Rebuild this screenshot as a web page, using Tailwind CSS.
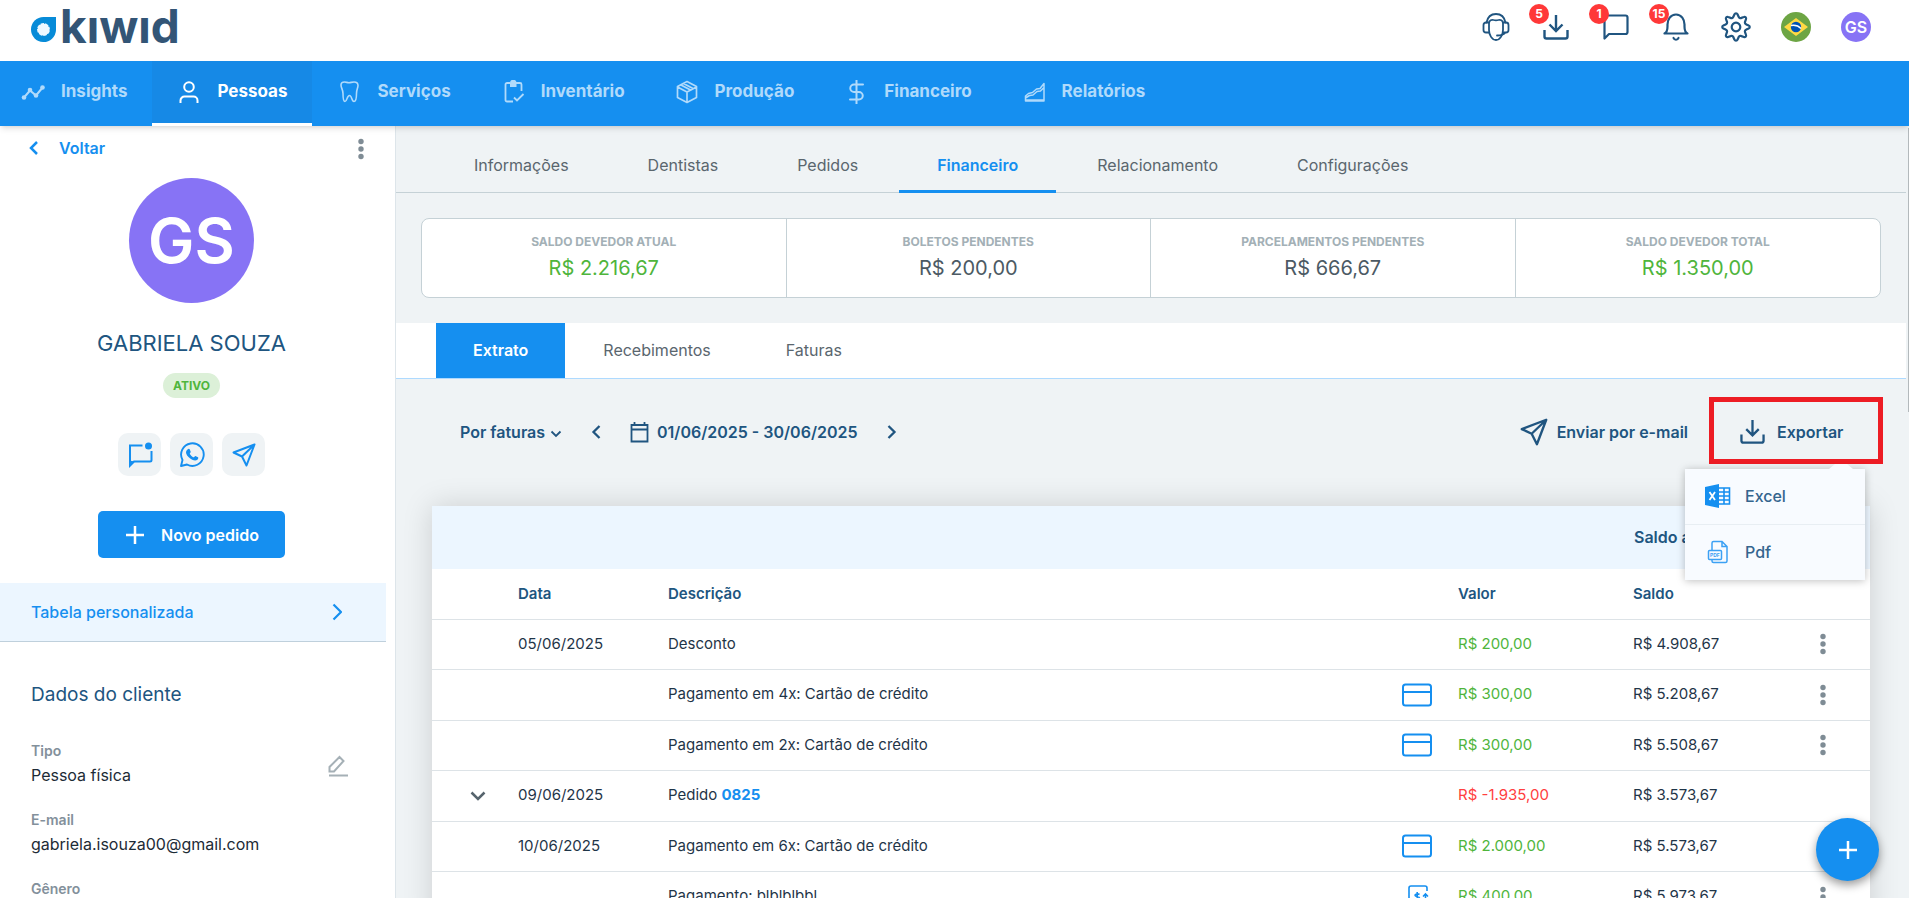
<!DOCTYPE html>
<html lang="pt-BR">
<head>
  <meta charset="UTF-8" />
  <meta name="viewport" content="width=device-width, initial-scale=1.0" />
  <title>Kiwid - Gabriela Souza</title>
  <script src="https://cdn.jsdelivr.net/npm/@tailwindcss/browser@4"></script>
</head>
<body class="h-screen flex flex-col overflow-hidden bg-[#eff3f5] font-['Inter',sans-serif] text-base text-[#1f3548]">

  <!-- Shared icons -->
  <svg class="hidden">
    <symbol id="dots" viewBox="0 0 6 22"><g fill="#7f8c95"><circle cx="3" cy="3.5" r="2.7"/><circle cx="3" cy="11" r="2.7"/><circle cx="3" cy="18.5" r="2.7"/></g></symbol>
    <symbol id="card" viewBox="0 0 30 24"><rect x="1" y="1.500" width="28" height="21" rx="2.500" fill="none" stroke="#158ff0" stroke-width="2"/><path d="M1 9h28" stroke="#158ff0" stroke-width="2"/></symbol>
    <symbol id="plane" viewBox="0 0 24 24"><path d="M22.500 1.500 1.500 9.500l8.500 4 4.500 9zM22.500 1.500 10 13.500" fill="none" stroke="currentColor" stroke-width="2" stroke-linejoin="round"/></symbol>
    <symbol id="download" viewBox="0 0 26 26"><path d="M1.500 16v6.500a2 2 0 0 0 2 2h19a2 2 0 0 0 2-2V16M13 1v16M6.500 10.500l6.500 6.500 6.500-6.500" fill="none" stroke="currentColor" stroke-width="2.400"/></symbol>
  </svg>

  <header class="h-[61px] shrink-0 bg-white flex items-start justify-between pl-[31px] pr-[38px]">
    <a href="#" aria-label="Kiwid" class="flex items-start gap-[3px]">
      <svg class="w-[26px] h-[26px] mt-[17px]" viewBox="0 0 26 26">
        <path d="M25 0v13A12.500 12.500 0 1 1 12.500 0z" fill="#078bd8"/>
        <circle cx="12.500" cy="12.500" r="6.500" fill="#eef8ff"/>
        <circle cx="12.500" cy="12.500" r="6.500" fill="none" stroke="#078bd8" stroke-width="1.500" stroke-dasharray="1 4.100"/>
      </svg>
      <span class="text-[46px] leading-[52px] font-bold text-[#335576]">kıwıd</span>
    </a>
    <div class="flex gap-[30px] pt-3 text-[#205580]">
      <button aria-label="Suporte" class="size-[30px] flex items-center justify-center">
        <svg class="size-7" viewBox="0 0 28 28" fill="none" stroke="currentColor" stroke-width="1.800" stroke-linecap="round">
          <path d="M4.500 9.500C5.500 4.500 9 1 14 1s8.500 3.500 9.500 8.500M7 10c.5-3 2.500-3.500 4.500-3 1.500.4 3.500.4 5 0 2-.5 4 0 4.500 3v7c0 5-3 10-7 10s-7-5-7-10z"/>
          <path d="M7 9.500H4a2.500 2.500 0 0 0-2.500 2.500v5A2.500 2.500 0 0 0 4 19.500h3M21 9.500h3a2.500 2.500 0 0 1 2.500 2.500v5a2.500 2.500 0 0 1-2.500 2.500h-3M23.500 19.500c-1.500 2-4 3-8.500 3"/>
        </svg>
      </button>
      <button aria-label="Downloads" class="relative size-[30px] flex items-center justify-center">
        <svg class="size-[26px]"><use href="#download"/></svg>
        <span class="absolute -left-3 -top-2 size-5 rounded-full bg-[#ff3838] text-white text-xs leading-5 font-bold text-center">5</span>
      </button>
      <button aria-label="Mensagens" class="relative size-[30px] flex items-center justify-center">
        <svg class="size-[26px]" viewBox="0 0 26 26" fill="none" stroke="currentColor" stroke-width="2.200" stroke-linejoin="round"><path d="M1.500 24.500V3.500a2 2 0 0 1 2-2h19a2 2 0 0 1 2 2v14.500a2 2 0 0 1-2 2H6z"/></svg>
        <span class="absolute -left-3 -top-2 size-5 rounded-full bg-[#ff3838] text-white text-xs leading-5 font-bold text-center">1</span>
      </button>
      <button aria-label="Notificações" class="relative size-[30px] flex items-center justify-center">
        <svg class="size-7" viewBox="0 0 28 28" fill="none" stroke="currentColor" stroke-width="2.200" stroke-linecap="round" stroke-linejoin="round"><path d="M2.500 20.500h23c-2-1-3-3-3-7v-2c0-5-3-10-8.500-10s-8.500 5-8.500 10v2c0 4-1 6-3 7zM11.500 25c.8 2.300 4.200 2.300 5 0"/></svg>
        <span class="absolute -left-3 -top-2 size-5 rounded-full bg-[#ff3838] text-white text-xs leading-5 font-bold text-center">15</span>
      </button>
      <button aria-label="Ajustes" class="size-[30px]">
        <svg class="size-[30px]" viewBox="-15 -15 30 30" fill="none" stroke="currentColor" stroke-width="2.200" stroke-linejoin="round">
          <circle r="4.300"/>
          <path d="M-2.600-10.300L-1.500-12.700A1.600 1.600 0 0 1 1.500-12.700L2.600-10.300A2 2 0 0 0 5.400-9.100L7.900-10A1.600 1.600 0 0 1 10-7.900L9.100-5.400A2 2 0 0 0 10.300-2.600L12.700-1.500A1.600 1.600 0 0 1 12.700 1.500L10.300 2.600A2 2 0 0 0 9.100 5.400L10 7.900A1.600 1.600 0 0 1 7.900 10L5.400 9.100A2 2 0 0 0 2.600 10.300L1.500 12.700A1.600 1.600 0 0 1-1.500 12.700L-2.600 10.300A2 2 0 0 0-5.400 9.100L-7.900 10A1.600 1.600 0 0 1-10 7.900L-9.100 5.400A2 2 0 0 0-10.300 2.600L-12.700 1.500A1.600 1.600 0 0 1-12.700-1.500L-10.300-2.600A2 2 0 0 0-9.100-5.400L-10-7.900A1.600 1.600 0 0 1-7.900-10L-5.400-9.100A2 2 0 0 0-2.600-10.300z"/>
        </svg>
      </button>
      <button aria-label="Idioma" class="size-[30px]">
        <svg class="size-[30px]" viewBox="0 0 30 30"><circle cx="15" cy="15" r="15" fill="#6da544"/><path d="M15 6l12 9-12 9-12-9z" fill="#ffda44"/><circle cx="15" cy="15" r="5.200" fill="#0052b4"/><path d="M10 13.500c4-.7 7.500.3 10 3" fill="none" stroke="#fff" stroke-width="1.400"/></svg>
      </button>
      <button class="size-[30px] rounded-full bg-[#8773f5] text-white text-base font-semibold">GS</button>
    </div>
  </header>

  <nav class="relative z-10 h-[65px] shrink-0 bg-[#158ff0] shadow-md flex text-[17px] font-bold text-[#b0dafb]">
    <a href="#" class="flex items-center gap-4 pl-[21px] pr-[25px] pb-[3px]">
      <svg class="size-6" viewBox="0 0 24 24" fill="none" stroke="currentColor" stroke-width="2"><path d="M3 17.500l6-7 6 5 7-8.500"/><g fill="currentColor" stroke="none"><circle cx="3" cy="17.500" r="2.300"/><circle cx="9" cy="10" r="2.300"/><circle cx="15" cy="15.500" r="2.300"/><circle cx="21.500" cy="7.500" r="2.300"/></g></svg>
      Insights
    </a>
    <a href="#" class="flex items-center gap-4 px-[25px] bg-[#1689e6] text-white border-b-3 border-white">
      <svg class="size-6" viewBox="0 0 24 24" fill="none" stroke="currentColor" stroke-width="2"><circle cx="12" cy="7" r="4.800"/><path d="M3.500 23v-2.500a4 4 0 0 1 4-4h9a4 4 0 0 1 4 4V23"/></svg>
      Pessoas
    </a>
    <a href="#" class="flex items-center gap-4 px-[25px] pb-[3px]">
      <svg class="size-6" viewBox="0 0 24 24" fill="none" stroke="currentColor" stroke-width="1.600" stroke-linejoin="round"><path d="M4 5c0-2 1.500-3 3.500-3 1.700 0 2.800.7 4.500.7s3-.7 5-.7 4 1 4 3.500c0 2.500-1.500 4-1.500 8 0 4-.7 8-2.500 8-2.500 0-2-6-4.500-6S10 21.500 8 21.500 6 17.500 6 13.500C6 9.500 4 8 4 5z"/></svg>
      Serviços
    </a>
    <a href="#" class="flex items-center gap-4 px-[25px] pb-[3px]">
      <svg class="size-6" viewBox="0 0 24 24" fill="none" stroke="currentColor" stroke-width="1.800"><path d="M12 21.500H6a1.500 1.500 0 0 1-1.500-1.500V4.500A1.500 1.500 0 0 1 6 3h3M15 3h4a1.500 1.500 0 0 1 1.500 1.500V11M13 17.500l3 3 6.500-6.500"/><path d="M9 3a3 3 0 0 1 6.500 0v4H9z" fill="currentColor" stroke="none"/></svg>
      Inventário
    </a>
    <a href="#" class="flex items-center gap-4 px-[25px] pb-[3px]">
      <svg class="size-6" viewBox="0 0 24 24" fill="none" stroke="currentColor" stroke-width="1.700" stroke-linejoin="round"><path d="M12 1.500l9.500 5v11L12 22.500l-9.500-5v-11zM2.500 7L12 12l9.500-5M12 12v10.500M6 5l9.500 5M8.500 3.500l9.500 5"/></svg>
      Produção
    </a>
    <a href="#" class="flex items-center gap-4 px-[25px] pb-[3px]">
      <svg class="size-6" viewBox="0 0 24 24" fill="none" stroke="currentColor" stroke-width="2" stroke-linecap="round"><path d="M12.500 0v24M19 4.500h-9a3.700 3.700 0 0 0 0 7.500h5a3.700 3.700 0 0 1 0 7.500H6"/></svg>
      Financeiro
    </a>
    <a href="#" class="flex items-center gap-4 px-[25px] pb-[3px]">
      <svg class="size-6" viewBox="0 0 24 24" fill="none" stroke="currentColor" stroke-width="1.500" stroke-linejoin="round"><path d="M3.500 21V16l3-2.500 4-1 4-3.500 3.500-.5 4-5V21zM3.500 18l4-2.500 3.500-.5 4-3.500 3.500-.5 3-3M3.500 20h18"/></svg>
      Relatórios
    </a>
  </nav>

  <div class="flex-1 min-h-0 flex">
    <!-- Client sidebar -->
    <aside class="w-[396px] shrink-0 bg-white border-r border-[#dde5ea] pr-[9px] pt-3 overflow-hidden">
      <div class="h-6 flex items-start justify-between pl-7 pr-[22px]">
        <a href="#" class="flex items-center gap-5 text-[#158ff0] leading-5 font-semibold">
          <svg class="w-[11px] h-4" viewBox="0 0 11 16"><path d="M9 2L3 8l6 6" fill="none" stroke="currentColor" stroke-width="2.500"/></svg>
          Voltar
        </a>
        <button aria-label="Mais opções"><svg class="w-[6px] h-[22px]"><use href="#dots"/></svg></button>
      </div>
      <div class="flex flex-col items-center pt-4 pr-[3px]">
        <div class="size-[125px] rounded-full bg-[#8773f5] text-white text-[62px] leading-[125px] font-semibold text-center">GS</div>
        <h1 class="mt-[26px] text-[22px] leading-7 text-[#205580]">GABRIELA SOUZA</h1>
        <span class="mt-4 h-[25px] px-[10px] rounded-full bg-[#dcf0d8] text-[#4fb53c] text-xs leading-[25px] font-bold">ATIVO</span>
        <div class="mt-[35px] flex gap-[9px] text-[#158ff0]">
          <button aria-label="Mensagem" class="size-[43px] rounded-[10px] bg-[#eff3f5] flex items-center justify-center">
            <svg class="size-[26px]" viewBox="0 0 26 26"><path d="M15.500 3.500H3v20l4-4h16a1.500 1.500 0 0 0 1.500-1.500V9" fill="none" stroke="currentColor" stroke-width="2"/><path d="M2 18.500v7l6-6z" fill="currentColor"/><circle cx="21.500" cy="4" r="3.500" fill="currentColor"/></svg>
          </button>
          <button aria-label="WhatsApp" class="size-[43px] rounded-[10px] bg-[#eff3f5] flex items-center justify-center">
            <svg class="size-[26px]" viewBox="0 0 26 26"><path d="M2 24l1.500-6A11.300 11.300 0 1 1 8 22.500z" fill="none" stroke="currentColor" stroke-width="1.900" stroke-linejoin="round"/><path d="M8.500 7.500c1-1 2-.8 2.300 0l.9 2.300c.2.600-.9 1.500-.9 1.900 0 .7 2.500 3.300 3.800 3.600.6.100 1.300-1.500 1.900-1.300l2.500 1.200c.6.300.3 1.800-.6 2.500-1.300 1-3 1-5.200 0-2.700-1.200-5.200-3.600-6-6.200-.5-1.500.2-3.100 1.300-4z" fill="currentColor"/></svg>
          </button>
          <button aria-label="Enviar" class="size-[43px] rounded-[10px] bg-[#eff3f5] flex items-center justify-center">
            <svg class="size-6"><use href="#plane"/></svg>
          </button>
        </div>
        <button class="mt-[35px] h-[47px] px-[26px] rounded-[5px] bg-[#158ff0] text-white font-semibold flex items-center gap-[15px]">
          <svg class="size-[22px]" viewBox="0 0 22 22"><path d="M11 2v18M2 11h18" stroke="currentColor" stroke-width="2.500"/></svg>
          Novo pedido
        </button>
      </div>
      <a href="#" class="mt-[25px] h-[59px] flex items-center justify-between pl-[31px] pr-11 bg-[#ecf6ff] border-b border-[#bfd0dc] text-[#158ff0] font-medium">
        Tabela personalizada
        <svg class="w-[10px] h-[18px]" viewBox="0 0 10 18"><path d="M1.500 1.500L9 9l-7.500 7.500" fill="none" stroke="currentColor" stroke-width="2.200"/></svg>
      </a>
      <div class="px-[31px]">
        <h2 class="mt-[41px] text-[19px] leading-6 text-[#205580]">Dados do cliente</h2>
        <dl class="mt-[34px] flex gap-4 justify-between">
          <div class="space-y-[23px]">
            <div>
              <dt class="text-sm font-semibold text-[#83909b]">Tipo</dt>
              <dd class="mt-[2px] text-[#1d2b36]">Pessoa física</dd>
            </div>
            <div>
              <dt class="text-sm font-semibold text-[#83909b]">E-mail</dt>
              <dd class="mt-[2px] text-[#1d2b36]">gabriela.isouza00@gmail.com</dd>
            </div>
            <div>
              <dt class="text-sm font-semibold text-[#83909b]">Gênero</dt>
              <dd class="mt-[2px] text-[#1d2b36]">Feminino</dd>
            </div>
          </div>
          <button aria-label="Editar" class="self-start mt-[14px] mr-[6px]">
            <svg class="size-[22px]" viewBox="0 0 22 22" fill="none" stroke="#a5b0b6" stroke-width="2"><path d="M2.500 16.500v-4.500L12.500 2l4 4-9.500 10.500zM2 20.500h19"/></svg>
          </button>
        </dl>
      </div>
    </aside>

    <main class="flex-1 min-w-0 pr-[3px] overflow-hidden">
      <div class="h-[67px] pl-10 flex gap-[3px] border-b border-[#c5d1d6] text-[#5a666e]">
        <a href="#" class="h-[67px] px-[38px] pt-[27px]">Informações</a>
        <a href="#" class="h-[67px] px-[38px] pt-[27px]">Dentistas</a>
        <a href="#" class="h-[67px] px-[38px] pt-[27px]">Pedidos</a>
        <a href="#" class="h-[67px] px-[38px] pt-[27px] border-b-3 border-[#158ff0] text-[#158ff0] font-semibold">Financeiro</a>
        <a href="#" class="h-[67px] px-[38px] pt-[27px]">Relacionamento</a>
        <a href="#" class="h-[67px] px-[38px] pt-[27px]">Configurações</a>
      </div>

      <div class="mt-[25px] ml-[25px] mr-[25px] h-20 grid grid-cols-4 bg-white border border-[#c5d1d6] rounded-lg divide-x divide-[#c5d1d6] text-center">
        <div class="pt-[13px]">
          <p class="text-xs leading-5 font-bold text-[#a3b0b6]">SALDO DEVEDOR ATUAL</p>
          <p class="mt-1 text-xl leading-6 text-[#4fb53c]">R$ 2.216,67</p>
        </div>
        <div class="pt-[13px]">
          <p class="text-xs leading-5 font-bold text-[#a3b0b6]">BOLETOS PENDENTES</p>
          <p class="mt-1 text-xl leading-6 text-[#4c5a64]">R$ 200,00</p>
        </div>
        <div class="pt-[13px]">
          <p class="text-xs leading-5 font-bold text-[#a3b0b6]">PARCELAMENTOS PENDENTES</p>
          <p class="mt-1 text-xl leading-6 text-[#4c5a64]">R$ 666,67</p>
        </div>
        <div class="pt-[13px]">
          <p class="text-xs leading-5 font-bold text-[#a3b0b6]">SALDO DEVEDOR TOTAL</p>
          <p class="mt-1 text-xl leading-6 text-[#4fb53c]">R$ 1.350,00</p>
        </div>
      </div>

      <div class="mt-[25px] h-14 pl-10 flex bg-white border-b border-[#aedaff] text-[#5a666e]">
        <a href="#" class="px-[37px] leading-[55px] bg-[#158ff0] text-white font-semibold">Extrato</a>
        <a href="#" class="px-[38px] leading-[55px]">Recebimentos</a>
        <a href="#" class="px-[37px] leading-[55px]">Faturas</a>
      </div>

      <!-- Filters and actions -->
      <div class="mt-[18px] pl-16 pr-[23px] h-[67px] flex items-center justify-between text-[#205580] font-semibold">
        <div class="flex items-center pt-[2px]">
          <label class="flex items-center gap-1">
            <select aria-label="Agrupar por" class="appearance-none">
              <option>Por faturas</option>
            </select>
            <svg class="w-3 h-2 mt-1" viewBox="0 0 12 8"><path d="M1.500 1.500L6 6l4.500-4.500" fill="none" stroke="currentColor" stroke-width="1.800"/></svg>
          </label>
          <button aria-label="Período anterior" class="ml-[29px]"><svg class="w-[10px] h-4" viewBox="0 0 10 16"><path d="M8.500 2L2.500 8l6 6" fill="none" stroke="currentColor" stroke-width="2.300"/></svg></button>
          <button class="ml-[29px] flex items-center gap-2">
            <svg class="w-[19px] h-[22px]" viewBox="0 0 19 22"><path d="M1.500 4h16v16.500h-16zM1 8.500h17M4.500 1v3M14.500 1v3" fill="none" stroke="currentColor" stroke-width="1.800"/></svg>
            01/06/2025 - 30/06/2025
          </button>
          <button aria-label="Próximo período" class="ml-[29px]"><svg class="w-[10px] h-4" viewBox="0 0 10 16"><path d="M1.500 2l6 6-6 6" fill="none" stroke="currentColor" stroke-width="2.300"/></svg></button>
        </div>
        <div class="flex items-center gap-[21px]">
          <button class="flex items-center gap-[9px] pt-[2px]">
            <svg class="size-7"><use href="#plane"/></svg>
            Enviar por e-mail
          </button>
          <div class="relative z-20">
            <button class="h-[67px] w-[174px] pl-[26px] pt-[2px] border-5 border-[#ed1c24] flex items-center gap-3">
              <svg class="size-[25px]"><use href="#download"/></svg>
              Exportar
            </button>
            <div class="absolute right-[18px] top-[72px] w-[180px] bg-[#f8fbff] shadow-[0_1px_8px_rgba(0,0,0,0.25)] font-medium text-[#34658e]">
              <svg class="absolute right-3 -top-[5px] w-6 h-[5px]" viewBox="0 0 24 5"><path d="M0 5l6-5h12l6 5z" fill="#f8fbff"/></svg>
              <button class="w-full h-14 pl-5 pb-[2px] flex items-center gap-[14px] border-b border-[#e8eef3]">
                <svg class="w-[26px] h-6" viewBox="0 0 26 24"><path d="M0 3l14-3v24L0 21z" fill="#158ff0"/><path d="M14 4h10.500v16H14M14 8h10M14 12h10M14 16h10M19 4v16" fill="none" stroke="#158ff0" stroke-width="1.600"/><path d="M4.500 8l5.500 8M10 8l-5.500 8" stroke="#fff" stroke-width="1.800"/></svg>
                Excel
              </button>
              <button class="w-full h-[55px] pl-5 pb-[2px] flex items-center gap-[14px]">
                <svg class="w-[26px] h-6" viewBox="0 0 26 24" fill="none" stroke="#3ca1f4" stroke-width="1.500"><path d="M7 10V3a1.500 1.500 0 0 1 1.500-1.500H17l5 5V21a1.500 1.500 0 0 1-1.500 1.500h-12A1.500 1.500 0 0 1 7 21v-1M17 1.500v5h5"/><rect x="3.500" y="10.500" width="13" height="9" rx="1"/><text x="5" y="17" font-size="5" font-weight="700" fill="#3ca1f4" stroke="none">PDF</text></svg>
                Pdf
              </button>
            </div>
          </div>
        </div>
      </div>

      <div class="mt-[42px] ml-9 mr-9 bg-white shadow-[0_0_28px_rgba(0,0,0,0.15)]">
        <table class="w-full table-fixed text-left text-[15px]">
          <colgroup>
            <col class="w-[73px]" /><col class="w-[150px]" /><col /><col class="w-14" /><col class="w-[175px]" /><col class="w-[175px]" /><col class="w-[75px]" />
          </colgroup>
          <thead class="text-[#205580]">
            <tr class="h-[63px] bg-[#ecf6ff] text-base">
              <td colspan="5"></td>
              <td colspan="2" class="pl-[14px] pb-[2px] font-semibold">Saldo anterior</td>
            </tr>
            <tr class="h-[50px] border-b border-[#dde3e7]">
              <th></th>
              <th class="pl-[13px] font-semibold">Data</th>
              <th class="pl-[13px] font-semibold">Descrição</th>
              <th></th>
              <th class="pl-[13px] font-semibold">Valor</th>
              <th class="pl-[13px] font-semibold">Saldo</th>
              <th></th>
            </tr>
          </thead>
          <tbody>
            <tr class="h-[50px] border-b border-[#dde3e7]">
              <td></td>
              <td class="pl-[13px]">05/06/2025</td>
              <td class="pl-[13px]">Desconto</td>
              <td></td>
              <td class="pl-[13px] text-[#4fb53c]">R$ 200,00</td>
              <td class="pl-[13px]">R$ 4.908,67</td>
              <td class="pl-[25px]"><button aria-label="Opções" class="block"><svg class="w-[6px] h-[22px]"><use href="#dots"/></svg></button></td>
            </tr>
            <tr class="h-[51px] border-b border-[#dde3e7]">
              <td></td>
              <td></td>
              <td class="pl-[13px]">Pagamento em 4x: Cartão de crédito</td>
              <td class="pl-[13px]"><svg class="w-[30px] h-6"><use href="#card"/></svg></td>
              <td class="pl-[13px] text-[#4fb53c]">R$ 300,00</td>
              <td class="pl-[13px]">R$ 5.208,67</td>
              <td class="pl-[25px]"><button aria-label="Opções" class="block"><svg class="w-[6px] h-[22px]"><use href="#dots"/></svg></button></td>
            </tr>
            <tr class="h-[50px] border-b border-[#dde3e7]">
              <td></td>
              <td></td>
              <td class="pl-[13px]">Pagamento em 2x: Cartão de crédito</td>
              <td class="pl-[13px]"><svg class="w-[30px] h-6"><use href="#card"/></svg></td>
              <td class="pl-[13px] text-[#4fb53c]">R$ 300,00</td>
              <td class="pl-[13px]">R$ 5.508,67</td>
              <td class="pl-[25px]"><button aria-label="Opções" class="block"><svg class="w-[6px] h-[22px]"><use href="#dots"/></svg></button></td>
            </tr>
            <tr class="h-[51px] border-b border-[#dde3e7]">
              <td class="pl-[38px]"><button aria-label="Expandir pedido" class="block"><svg class="w-4 h-[10px]" viewBox="0 0 16 10"><path d="M1.500 1.500L8 8l6.500-6.500" fill="none" stroke="#56646d" stroke-width="2.500"/></svg></button></td>
              <td class="pl-[13px]">09/06/2025</td>
              <td class="pl-[13px]">Pedido <a href="#" class="font-bold text-[#158ff0]">0825</a></td>
              <td></td>
              <td class="pl-[13px] text-[#ff4040]">R$ -1.935,00</td>
              <td class="pl-[13px]">R$ 3.573,67</td>
              <td></td>
            </tr>
            <tr class="h-[50px] border-b border-[#dde3e7]">
              <td></td>
              <td class="pl-[13px]">10/06/2025</td>
              <td class="pl-[13px]">Pagamento em 6x: Cartão de crédito</td>
              <td class="pl-[13px]"><svg class="w-[30px] h-6"><use href="#card"/></svg></td>
              <td class="pl-[13px] text-[#4fb53c]">R$ 2.000,00</td>
              <td class="pl-[13px]">R$ 5.573,67</td>
              <td></td>
            </tr>
            <tr class="h-[51px] border-b border-[#dde3e7]">
              <td></td>
              <td></td>
              <td class="pl-[13px]">Pagamento: blblblbbl</td>
              <td class="pl-[17px]">
                <svg class="size-6" viewBox="0 0 24 24" fill="none" stroke="#158ff0" stroke-width="1.600"><path d="M3 14V3a2 2 0 0 1 2-2h14a2 2 0 0 1 2 2v3M0 14h13v6a2.500 2.500 0 0 0 5 0v-4M3 22h13M19.500 16V9M17 11.500L19.500 9l2.500 2.500"/><path d="M13.500 9.500c-1.500-1-4.500-.8-4.500.8s4.500 1 4.500 2.700-3 1.800-4.800.8M11.200 7v9"/></svg>
              </td>
              <td class="pl-[13px] text-[#4fb53c]">R$ 400,00</td>
              <td class="pl-[13px]">R$ 5.973,67</td>
              <td class="pl-[25px]"><button aria-label="Opções" class="block"><svg class="w-[6px] h-[22px]"><use href="#dots"/></svg></button></td>
            </tr>
          </tbody>
        </table>
      </div>
    </main>
    <!-- Scroll thumb -->
    <div class="w-px h-[284px] mt-[2px] -ml-px bg-[#b3b9bc]"></div>
  </div>

  <button aria-label="Adicionar" class="fixed right-[30px] bottom-[17px] size-[63px] rounded-full bg-[#158ff0] text-white shadow-[0_4px_10px_rgba(0,0,0,0.4)] flex items-center justify-center">
    <svg class="size-5" viewBox="0 0 20 20"><path d="M10 1v18M1 10h18" stroke="currentColor" stroke-width="2.500"/></svg>
  </button>
</body>
</html>
